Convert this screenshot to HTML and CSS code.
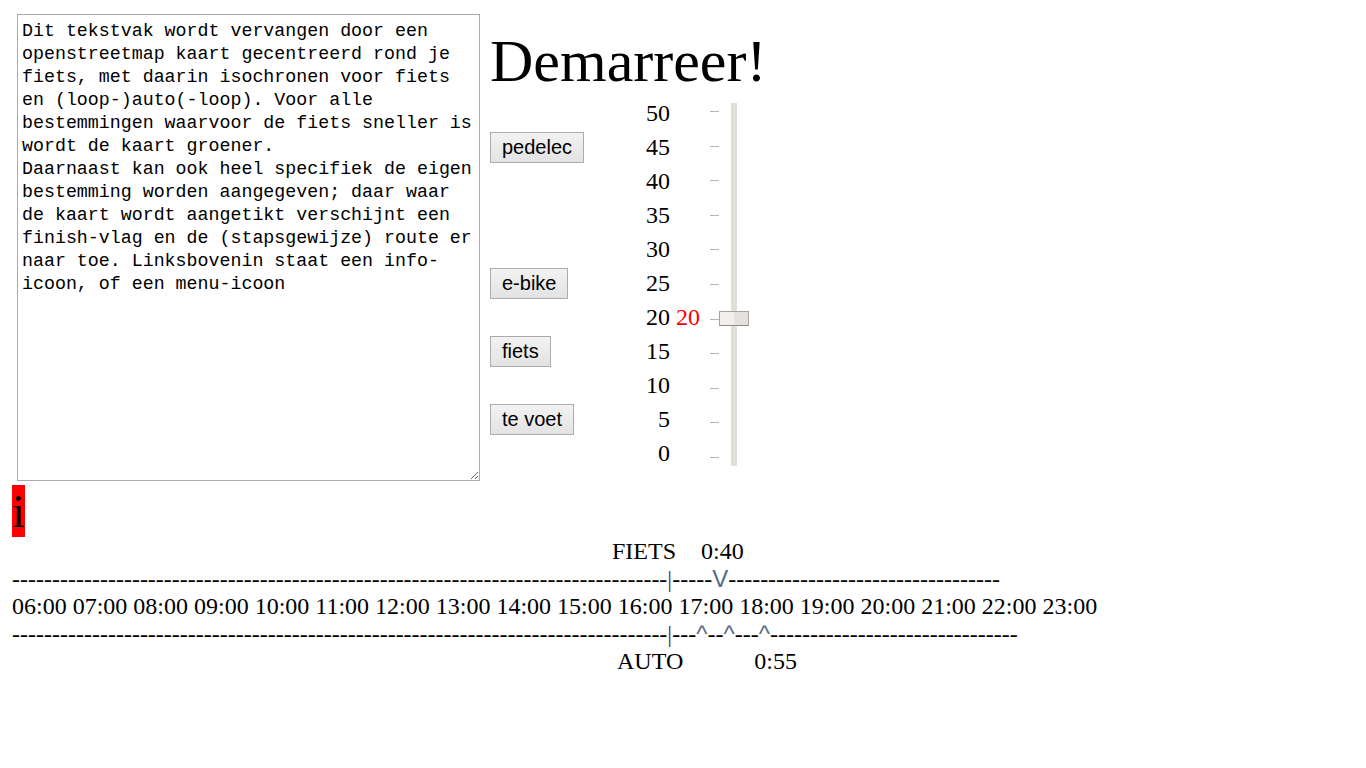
FILE: index.html
```html
<!DOCTYPE html>
<html lang="nl">
<head>
<meta charset="utf-8">
<title>Demarreer!</title>
<link rel="stylesheet" href="styles.css">
</head>
<body>
<div class="page">
  <div class="top">
    <textarea class="info">Dit tekstvak wordt vervangen door een openstreetmap kaart gecentreerd rond je fiets, met daarin isochronen voor fiets en (loop-)auto(-loop). Voor alle bestemmingen waarvoor de fiets sneller is wordt de kaart groener.
Daarnaast kan ook heel specifiek de eigen bestemming worden aangegeven; daar waar de kaart wordt aangetikt verschijnt een finish-vlag en de (stapsgewijze) route er naar toe. Linksbovenin staat een info-icoon, of een menu-icoon</textarea>
    <div class="panel">
      <h1 class="title">Demarreer!</h1>
      <div class="controls">
        <div class="ticks">
          <span class="tick"></span><span class="tick"></span><span class="tick"></span><span class="tick"></span><span class="tick"></span><span class="tick"></span><span class="tick"></span><span class="tick"></span><span class="tick"></span><span class="tick"></span><span class="tick"></span>
        </div>
        <div class="slider">
          <div class="track"><div class="thumb"></div></div>
        </div>

        <div class="cell"></div><div class="label">50</div><div class="value"></div>
        <div class="cell"><button class="mode">pedelec</button></div><div class="label">45</div><div class="value"></div>
        <div class="cell"></div><div class="label">40</div><div class="value"></div>
        <div class="cell"></div><div class="label">35</div><div class="value"></div>
        <div class="cell"></div><div class="label">30</div><div class="value"></div>
        <div class="cell"><button class="mode">e-bike</button></div><div class="label">25</div><div class="value"></div>
        <div class="cell"></div><div class="label">20</div><div class="value current">20</div>
        <div class="cell"><button class="mode">fiets</button></div><div class="label">15</div><div class="value"></div>
        <div class="cell"></div><div class="label">10</div><div class="value"></div>
        <div class="cell"><button class="mode">te voet</button></div><div class="label">5</div><div class="value"></div>
        <div class="cell"></div><div class="label">0</div><div class="value"></div>
      </div>
    </div>
  </div>

  <div class="info-icon">i</div>

  <div class="timeline">
    <div class="line"><span class="name fiets">FIETS</span><span class="dur fiets-dur">0:40</span></div>
    <div class="line">----------------------------------------------------------------------------------<span class="now">|</span>-----<span class="mark">V</span>----------------------------------</div>
    <div class="line">06:00 07:00 08:00 09:00 10:00 11:00 12:00 13:00 14:00 15:00 16:00 17:00 18:00 19:00 20:00 21:00 22:00 23:00</div>
    <div class="line">----------------------------------------------------------------------------------<span class="now">|</span>---<span class="mark">^</span>--<span class="mark">^</span>---<span class="mark">^</span>-------------------------------</div>
    <div class="line"><span class="name auto">AUTO</span><span class="dur auto-dur">0:55</span></div>
  </div>
</div>
</body>
</html>
```

FILE: styles.css
```css
html, body {
  margin: 0;
  padding: 0;
  background: #ffffff;
}

body {
  font-family: "Liberation Serif", "Times New Roman", serif;
  color: #000000;
}

.page {
  padding: 14px 0 0 12px;
}

.top {
  display: flex;
  align-items: flex-start;
  margin-left: 5px;
  margin-bottom: 4px;
}

.info {
  box-sizing: border-box;
  width: 463px;
  height: 467px;
  margin: 0;
  padding: 5px 3px 2px 4px;
  border: 1px solid #a9a9a9;
  font-family: "Liberation Mono", "DejaVu Sans Mono", monospace;
  font-size: 18.3px;
  line-height: 23px;
  color: #000000;
  background: #ffffff;
  overflow: hidden;
}

.panel {
  margin-left: 10px;
}

.title {
  margin: 13px 0 0 0;
  font-family: "Liberation Serif", "Times New Roman", serif;
  font-weight: normal;
  font-size: 60px;
  line-height: 69px;
}

.controls {
  display: grid;
  grid-template-columns: 156px 24px 40px 9px 30px;
  grid-template-rows: repeat(11, 34.1px);
}

.cell {
  display: flex;
  align-items: center;
}

.label {
  font-size: 24px;
  text-align: right;
  align-self: center;
  line-height: 27px;
}

.value {
  font-size: 24px;
  line-height: 27px;
  align-self: center;
  padding-left: 6px;
}

.value.current {
  color: #ff0000;
}

.mode {
  box-sizing: border-box;
  height: 31px;
  margin: 0;
  padding: 0 11px;
  border: 1px solid #acacac;
  border-radius: 0;
  background: linear-gradient(#f2f2f2, #e3e3e3);
  font-family: "Liberation Sans", Arial, sans-serif;
  font-size: 20px;
  color: #000000;
}

.ticks {
  grid-column: 4;
  grid-row: 1 / -1;
  display: flex;
  flex-direction: column;
  justify-content: space-between;
  padding: 15px 0 13px 0;
}

.tick {
  display: block;
  width: 9px;
  height: 1px;
  background: #b4b4b4;
}

.slider {
  grid-column: 5;
  grid-row: 1 / -1;
  padding-top: 7px;
}

.track {
  position: relative;
  width: 6px;
  height: 363px;
  margin-left: 12px;
  background: #e1ddd7;
}

.thumb {
  position: absolute;
  top: 208px;
  left: -12px;
  box-sizing: border-box;
  width: 30px;
  height: 15px;
  border: 1px solid #a7a39d;
  border-bottom-color: #8f8b86;
  background: linear-gradient(90deg, #f1efec 0, #f1efec 50%, #e5e2de 50%, #e5e2de 100%);
}

.info-icon {
  display: block;
  width: 13px;
  height: 52px;
  background: #ff0000;
  font-size: 46px;
  line-height: 54px;
  text-align: center;
}

.timeline {
  padding-top: 1px;
  font-size: 24px;
  line-height: 27px;
}

.line {
  display: block;
  white-space: pre;
}

.name.fiets {
  margin-left: 600px;
}

.dur.fiets-dur {
  margin-left: 25px;
}

.name.auto {
  margin-left: 605px;
}

.dur.auto-dur {
  margin-left: 71px;
}

.now {
  color: #4b2a5a;
}

.mark {
  font-family: "Liberation Sans", Arial, sans-serif;
  font-weight: 300;
  color: #566a88;
}
```
